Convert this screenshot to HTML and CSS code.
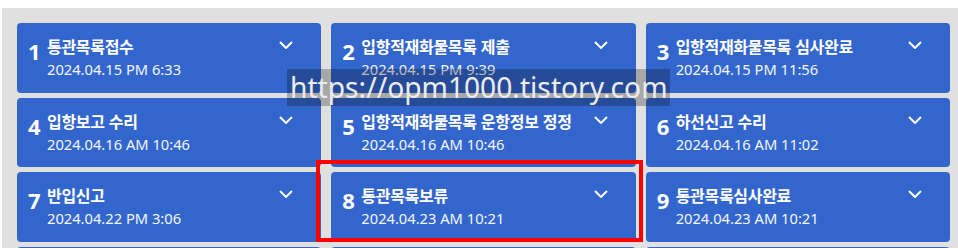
FILE: index.html
```html
<!DOCTYPE html>
<html lang="ko">
<head>
<meta charset="utf-8">
<link rel="stylesheet" href="styles.css">
</head>
<body>
<div class="board">
  <div class="grid">
    <div class="card"><span class="num">1</span><div class="info"><div class="title">통관목록접수</div><div class="date">2024.04.15 PM 6:33</div></div><svg class="chev" viewBox="0 0 14 8"><path d="M1 1l6 6 6-6"/></svg></div>
    <div class="card"><span class="num">2</span><div class="info"><div class="title">입항적재화물목록 제출</div><div class="date">2024.04.15 PM 9:39</div></div><svg class="chev" viewBox="0 0 14 8"><path d="M1 1l6 6 6-6"/></svg></div>
    <div class="card"><span class="num">3</span><div class="info"><div class="title">입항적재화물목록 심사완료</div><div class="date">2024.04.15 PM 11:56</div></div><svg class="chev" viewBox="0 0 14 8"><path d="M1 1l6 6 6-6"/></svg></div>
    <div class="card"><span class="num">4</span><div class="info"><div class="title">입항보고 수리</div><div class="date">2024.04.16 AM 10:46</div></div><svg class="chev" viewBox="0 0 14 8"><path d="M1 1l6 6 6-6"/></svg></div>
    <div class="card"><span class="num">5</span><div class="info"><div class="title">입항적재화물목록 운항정보 정정</div><div class="date">2024.04.16 AM 10:46</div></div><svg class="chev" viewBox="0 0 14 8"><path d="M1 1l6 6 6-6"/></svg></div>
    <div class="card"><span class="num">6</span><div class="info"><div class="title">하선신고 수리</div><div class="date">2024.04.16 AM 11:02</div></div><svg class="chev" viewBox="0 0 14 8"><path d="M1 1l6 6 6-6"/></svg></div>
    <div class="card"><span class="num">7</span><div class="info"><div class="title">반입신고</div><div class="date">2024.04.22 PM 3:06</div></div><svg class="chev" viewBox="0 0 14 8"><path d="M1 1l6 6 6-6"/></svg></div>
    <div class="card"><span class="num">8</span><div class="info"><div class="title">통관목록보류</div><div class="date">2024.04.23 AM 10:21</div></div><svg class="chev" viewBox="0 0 14 8"><path d="M1 1l6 6 6-6"/></svg></div>
    <div class="card"><span class="num">9</span><div class="info"><div class="title">통관목록심사완료</div><div class="date">2024.04.23 AM 10:21</div></div><svg class="chev" viewBox="0 0 14 8"><path d="M1 1l6 6 6-6"/></svg></div>
    <div class="card"></div>
    <div class="card"></div>
    <div class="card"></div>
  </div>
</div>
<div class="watermark">https://opm1000.tistory.com</div>
<div class="highlight"></div>
</body>
</html>
```

FILE: styles.css
```css
html, body {
  margin: 0;
  padding: 0;
  background: #ffffff;
  overflow: hidden;
}
body {
  width: 958px;
  height: 248px;
  position: relative;
  font-family: "Noto Sans", "Noto Sans CJK KR", sans-serif;
}
.board {
  margin: 8px 0 0 2px;
  background: #e0e0e0;
  padding: 15px 8px 0 15px;
  height: 240px;
  box-sizing: border-box;
  overflow: hidden;
}
.grid {
  display: grid;
  grid-template-columns: repeat(3, 1fr);
  grid-auto-rows: 69.5px;
  column-gap: 10px;
  row-gap: 5.2px;
}
.card {
  background: #3366cc;
  border-radius: 4px;
  display: flex;
  align-items: flex-start;
  padding: 12px 0 0 11px;
  box-sizing: border-box;
  color: #ffffff;
}
.num {
  font-size: 22px;
  font-weight: 700;
  line-height: 22px;
  width: 19px;
  margin-top: 5px;
  flex: none;
}
.info {
  display: flex;
  flex-direction: column;
  flex: 1;
}
.title {
  font-size: 16px;
  font-weight: 700;
  line-height: 22px;
  letter-spacing: -0.3px;
  font-family: "Noto Sans CJK KR", sans-serif;
}
.date {
  font-size: 14.7px;
  line-height: 20px;
  margin-top: 2px;
  color: #f4f6fc;
}
.chev {
  width: 14px;
  height: 8px;
  margin: 6px 28px 0 0;
  flex: none;
  fill: none;
  stroke: #ffffff;
  stroke-width: 2;
}
.watermark {
  position: absolute;
  left: 287px;
  top: 69px;
  width: 383px;
  height: 37px;
  background: rgba(0, 0, 0, 0.25);
  color: #ececec;
  font-family: "Noto Sans", sans-serif;
  font-size: 28.2px;
  line-height: 37px;
  padding-left: 3px;
  box-sizing: border-box;
  white-space: nowrap;
}
.highlight {
  position: absolute;
  left: 316px;
  top: 160px;
  width: 327px;
  height: 82px;
  border: 4px solid #ff0000;
  box-sizing: border-box;
}
```
